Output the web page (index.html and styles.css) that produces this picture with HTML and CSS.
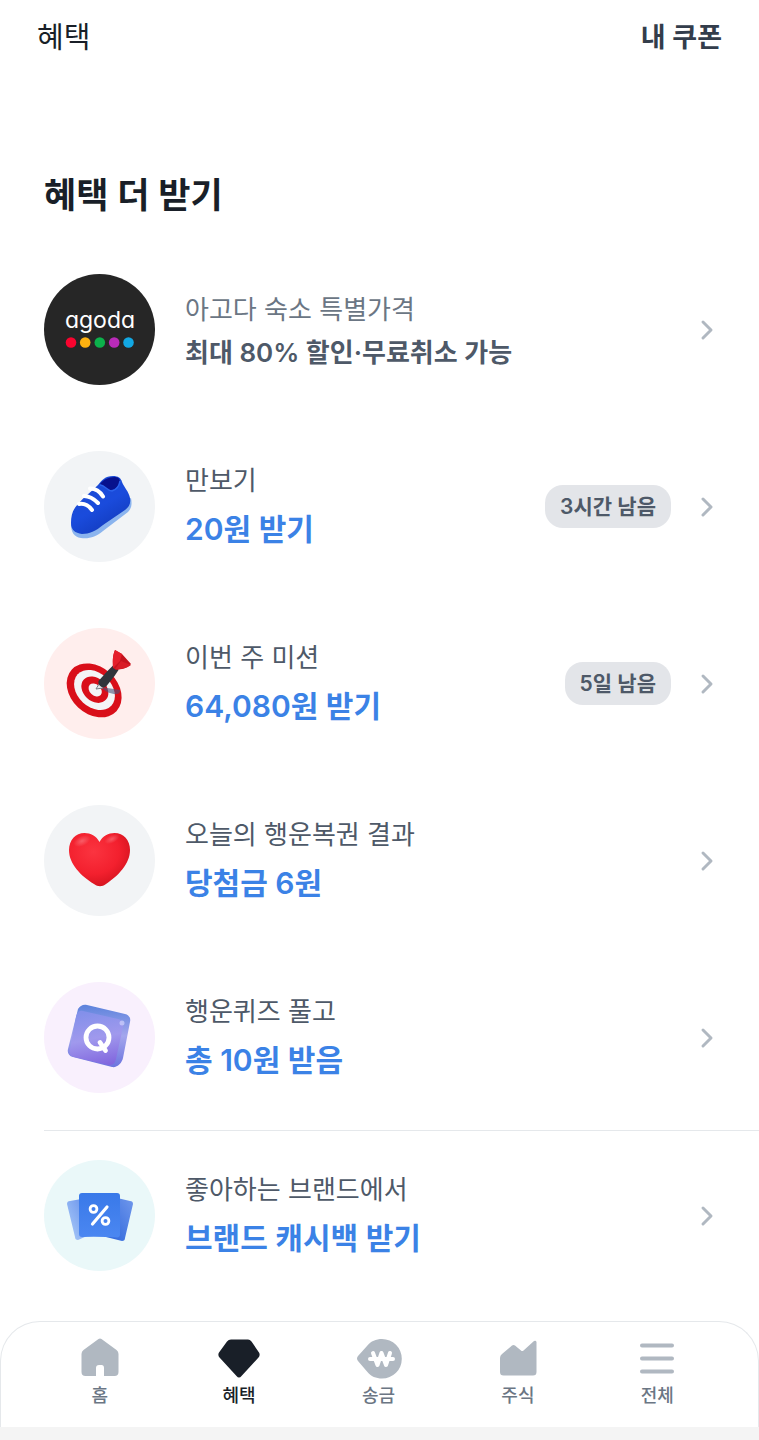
FILE: index.html
```
<!DOCTYPE html>
<html lang="ko">
<head>
    <meta charset="UTF-8">
    <meta name="viewport" content="width=device-width, initial-scale=1.0">
    <title>혜택</title>
    <link rel="stylesheet" href="styles.css">
</head>
<body>
    <header class="top-bar">
        <h1 class="top-title">혜택</h1>
        <a href="#coupons" class="coupon-link">내 쿠폰</a>
    </header>

    <main class="content">
        <h2 class="section-title">혜택 더 받기</h2>

        <ul class="benefit-list">
            <li>
                <a href="#agoda" class="benefit">
                    <svg class="benefit-icon" viewBox="0 0 111 111" aria-hidden="true">
                        <circle cx="55.5" cy="55.5" r="55.5" fill="#262626"/>
                        <text class="agoda-text" x="56" y="54" text-anchor="middle">agoda</text>
                        <circle cx="27" cy="68.500" r="5.300" fill="#f9042f"/>
                        <circle cx="41.200" cy="68.500" r="5.300" fill="#ffb210"/>
                        <circle cx="55.800" cy="68.500" r="5.300" fill="#0cb14b"/>
                        <circle cx="70.200" cy="68.500" r="5.300" fill="#b92bb8"/>
                        <circle cx="84.500" cy="68.500" r="5.300" fill="#12a8e3"/>
                    </svg>
                    <span class="benefit-text">
                        <span class="benefit-label muted">아고다 숙소 특별가격</span>
                        <strong class="benefit-desc">최대 80% 할인·무료취소 가능</strong>
                    </span>
                    <svg class="chevron" viewBox="0 0 16 24" aria-hidden="true"><path d="M4 4l8 8-8 8"/></svg>
                </a>
            </li>
            <li>
                <a href="#steps" class="benefit">
                    <svg class="benefit-icon" viewBox="4 6 111 111" aria-hidden="true">
                        <defs>
                            <linearGradient id="shoe" x1="0" y1="0" x2="0.6" y2="1">
                                <stop offset="0" stop-color="#1c4bd0"/>
                                <stop offset="0.6" stop-color="#1a4bdc"/>
                                <stop offset="1" stop-color="#123bbd"/>
                            </linearGradient>
                        </defs>
                        <circle cx="59.5" cy="61.5" r="55.5" fill="#f2f4f6"/>
                        <path d="M31 79c0 8 3 13 10 14 8 1 15-1 22-7l25-19c4-4 4-9 3-14z" fill="#8bb4ee"/>
                        <path d="M58 40c4-5 7-9 15-9 5 0 8 2 9 6 2 5 7 10 8 16 1 6-1 9-5 12L63 80c-7 6-14 9-21 9-7-1-11-4-11-11 0-8 2-14 7-19 6-7 13-12 20-19z" fill="url(#shoe)"/>
                        <path d="M60 39c3-4 8-7 15-7 4 0 6 3 4 7-2 3-5 6-8 6-4 0-7-4-11-6z" fill="#07118d"/>
                        <path d="M60 40c5 0 7 6 12 6 4-1 7-4 8-10" fill="none" stroke="#2b62ec" stroke-width="1.500"/>
                        <path d="M50 43.500c5 0 10 3 13 8M44 51c6 0 10 3 14 7M39 59c6-1 10 2 13 6" fill="none" stroke="#fff" stroke-width="4" stroke-linecap="round"/>
                    </svg>
                    <span class="benefit-text">
                        <span class="benefit-label">만보기</span>
                        <strong class="benefit-amount">20원 받기</strong>
                    </span>
                    <span class="badge">3시간 남음</span>
                    <svg class="chevron" viewBox="0 0 16 24" aria-hidden="true"><path d="M4 4l8 8-8 8"/></svg>
                </a>
            </li>
            <li>
                <a href="#mission" class="benefit">
                    <svg class="benefit-icon" viewBox="4 6 111 111" aria-hidden="true">
                        <circle cx="59.5" cy="61.5" r="55.5" fill="#ffeeed"/>
                        <g transform="rotate(43 54.500 68)">
                            <ellipse cx="54.500" cy="68.500" rx="30.500" ry="23.500" fill="#d90f1a"/>
                            <ellipse cx="54.500" cy="68" rx="23" ry="17" fill="#f4f4f6"/>
                            <ellipse cx="54.500" cy="67.500" rx="15" ry="11.500" fill="#d90f1a"/>
                            <ellipse cx="55" cy="67.500" rx="7.500" ry="5.500" fill="#f4f4f6"/>
                        </g>
                        <path d="M61 65l19 3c0 3-1 4-4 4-6 0-10-2-15-7z" fill="#48547c" opacity="0.6"/>
                        <path d="M56 67l3-5 4 4z" fill="#e5e7eb" stroke="#777d86"/>
                        <path d="M58.500 59l9-10 6-6 5 5-4 6-8 10c-3 3-9 0-8-5z" fill="#30343b"/>
                        <path d="M73 46c0-6-1-11 2-18l7 4 9 10c-5 5-9 5-15 6z" fill="#c5131e"/>
                        <path d="M73 46c0-6-1-11 2-18l7 4-2 7z" fill="#e51f2b"/>
                        <path d="M75 47l6-8 10 4c-5 4-10 4-16 4z" fill="#d91c27"/>
                    </svg>
                    <span class="benefit-text">
                        <span class="benefit-label">이번 주 미션</span>
                        <strong class="benefit-amount">64,080원 받기</strong>
                    </span>
                    <span class="badge">5일 남음</span>
                    <svg class="chevron" viewBox="0 0 16 24" aria-hidden="true"><path d="M4 4l8 8-8 8"/></svg>
                </a>
            </li>
            <li>
                <a href="#lottery" class="benefit">
                    <svg class="benefit-icon" viewBox="4 5 111 111" aria-hidden="true">
                        <defs>
                            <radialGradient id="heart" cx="0.4" cy="0.35" r="0.7">
                                <stop offset="0" stop-color="#fb3440"/>
                                <stop offset="0.6" stop-color="#f3202e"/>
                                <stop offset="1" stop-color="#d2121d"/>
                            </radialGradient>
                            <radialGradient id="shine">
                                <stop offset="0" stop-color="#fff" stop-opacity="0.25"/>
                                <stop offset="1" stop-color="#fff" stop-opacity="0"/>
                            </radialGradient>
                        </defs>
                        <circle cx="59.5" cy="60.5" r="55.5" fill="#f2f4f6"/>
                        <path d="M59.500 42c3-6 9-9 15-9 9 0 15.500 7 15.500 17 0 14-12 26-24 34-4 3-8 3-12 0C41 76 29 64 29 50c0-10 6.500-17 15.500-17 6 0 12 3 15 9z" fill="url(#heart)"/>
                        <ellipse cx="42" cy="41" rx="9" ry="5" fill="url(#shine)" transform="rotate(-25 42 41)"/>
                        <ellipse cx="72" cy="39" rx="8" ry="4" fill="url(#shine)" transform="rotate(-25 72 39)"/>
                    </svg>
                    <span class="benefit-text">
                        <span class="benefit-label">오늘의 행운복권 결과</span>
                        <strong class="benefit-amount">당첨금 6원</strong>
                    </span>
                    <svg class="chevron" viewBox="0 0 16 24" aria-hidden="true"><path d="M4 4l8 8-8 8"/></svg>
                </a>
            </li>
            <li>
                <a href="#quiz" class="benefit before-divider">
                    <svg class="benefit-icon" viewBox="4 5 111 111" aria-hidden="true">
                        <defs>
                            <linearGradient id="cube" x1="0.4" y1="0" x2="0.6" y2="1">
                                <stop offset="0" stop-color="#8390ea"/>
                                <stop offset="0.5" stop-color="#a099ed"/>
                                <stop offset="1" stop-color="#8267de"/>
                            </linearGradient>
                            <linearGradient id="cubeSide" x1="0" y1="0" x2="0" y2="1">
                                <stop offset="0" stop-color="#5c83dc"/>
                                <stop offset="0.5" stop-color="#a4a6ed"/>
                                <stop offset="1" stop-color="#6c74de"/>
                            </linearGradient>
                        </defs>
                        <circle cx="59.5" cy="60.5" r="55.5" fill="#f9f0fd"/>
                        <path d="M38 32c2-3 5-5 9-4l38 9c4 1 6 4 5 8l-7 36c-1 5-6 10-11 9l-39-10c-4-1-6-4-5-8z" fill="url(#cubeSide)"/>
                        <path d="M43 34l35 8c4 1 6 4 5 8l-7 32c-1 5-4 7-8 6l-34-8c-4-1-5-4-4-8l6-32c1-4 3-7 7-6z" fill="url(#cube)"/>
                        <circle cx="57.500" cy="60.500" r="11.500" fill="none" stroke="#fff" stroke-width="4.800"/>
                        <path d="M60 65.500l5.500 8" fill="none" stroke="#fff" stroke-width="4.800" stroke-linecap="round"/>
                        <circle cx="82" cy="46" r="2.500" fill="#d0d2fc" opacity="0.7"/>
                    </svg>
                    <span class="benefit-text">
                        <span class="benefit-label">행운퀴즈 풀고</span>
                        <strong class="benefit-amount">총 10원 받음</strong>
                    </span>
                    <svg class="chevron" viewBox="0 0 16 24" aria-hidden="true"><path d="M4 4l8 8-8 8"/></svg>
                </a>
            </li>
            <li class="divided">
                <a href="#cashback" class="benefit after-divider">
                    <svg class="benefit-icon" viewBox="4 5 111 111" aria-hidden="true">
                        <defs>
                            <linearGradient id="cardLeft" x1="0" y1="1" x2="1" y2="0">
                                <stop offset="0" stop-color="#afcff9"/>
                                <stop offset="1" stop-color="#648eeb"/>
                            </linearGradient>
                            <linearGradient id="cardRight" x1="1" y1="0" x2="0" y2="1">
                                <stop offset="0" stop-color="#7198ec"/>
                                <stop offset="1" stop-color="#2a63da"/>
                            </linearGradient>
                            <linearGradient id="cardFront" x1="0" y1="0" x2="0" y2="1">
                                <stop offset="0" stop-color="#3979e9"/>
                                <stop offset="1" stop-color="#4b87f1"/>
                            </linearGradient>
                        </defs>
                        <circle cx="59.5" cy="60.5" r="55.5" fill="#eaf8f9"/>
                        <path d="M30 46l17-3v38l-9 4c-2 0-3-1-3-3l-8-33c0-2 1-3 3-3z" fill="url(#cardLeft)"/>
                        <path d="M73 42l17 4c2 0 3 1 3 3l-8 34c0 2-1 3-3 3l-16-4z" fill="url(#cardRight)"/>
                        <path d="M42 38h35a3 3 0 0 1 3 3v38a3 3 0 0 1-3 3.500q-17-1-35-.5a3 3 0 0 1-3-3V41a3 3 0 0 1 3-3z" fill="url(#cardFront)"/>
                        <path d="M67 52L52.500 69" stroke="#fff" stroke-width="3.200" stroke-linecap="round"/>
                        <circle cx="53.500" cy="54" r="3.400" fill="none" stroke="#fff" stroke-width="2.800"/>
                        <circle cx="65.500" cy="66" r="3.400" fill="none" stroke="#fff" stroke-width="2.800"/>
                    </svg>
                    <span class="benefit-text">
                        <span class="benefit-label">좋아하는 브랜드에서</span>
                        <strong class="benefit-amount">브랜드 캐시백 받기</strong>
                    </span>
                    <svg class="chevron" viewBox="0 0 16 24" aria-hidden="true"><path d="M4 4l8 8-8 8"/></svg>
                </a>
            </li>
        </ul>
    </main>

    <footer class="bottom-area">
        <nav class="tab-bar">
            <a href="#home" class="tab">
                <svg class="tab-icon" viewBox="0 0 48 42" aria-hidden="true">
                    <path d="M22.500 1q1.500-1 3 0l15 11q2 1.500 2 4v18q0 4-4 4H28v-8q0-3-2.500-3h-2.500q-3 0-3 3v8h-10.500q-4 0-4-4V16q0-2.500 2-4z"/>
                </svg>
                <span>홈</span>
            </a>
            <a href="#benefits" class="tab active" aria-current="page">
                <svg class="tab-icon" viewBox="0 0 48 42" aria-hidden="true">
                    <path d="M16 1.500h17q2 0 3.500 2l7.500 11q1.500 2.500-.5 5L26.500 38q-2.500 3-5 0l-17-18.500q-2-2.500-.5-5l8-11q1.500-2 4-2z"/>
                </svg>
                <span>혜택</span>
            </a>
            <a href="#transfer" class="tab">
                <svg class="tab-icon" viewBox="0 0 48 42" aria-hidden="true">
                    <path d="M27 1a19.800 19.800 0 0 1 0 39.600c-6 0-11-2-15-7L3 23q-2-2.500 0-5l9-10c4-5 9-7 15-7z"/>
                    <path class="won" d="M15 21h23M18 15l4.500 12 4-12 4.500 12 4-12"/>
                </svg>
                <span>송금</span>
            </a>
            <a href="#stocks" class="tab">
                <svg class="tab-icon" viewBox="0 0 48 42" aria-hidden="true">
                    <path d="M6 20q0-2.500 2-4L18 7.500q1.500-1 3 0l6 5q1 1 2.500 0L40 3q2-1 2.500 1v30q0 3.500-3.500 3.500H9.500Q6 37.500 6 34z"/>
                </svg>
                <span>주식</span>
            </a>
            <a href="#all" class="tab">
                <svg class="tab-icon menu" viewBox="0 0 48 42" aria-hidden="true">
                    <path d="M9 7.500h30M9 20.500h30M9 33.500h30"/>
                </svg>
                <span>전체</span>
            </a>
        </nav>
    </footer>
</body>
</html>
```
FILE: styles.css
```
:root {
    --bg: #ffffff;
    --bg-bottom: #f4f4f4;
    --text-primary: #191f28;
    --text-strong: #333d4b;
    --text-desc: #4e5968;
    --text-muted: #6b7684;
    --icon-gray: #b0b8c1;
    --line: #e5e8eb;
    --accent: #3b82e6;
}

* {
    margin: 0;
    padding: 0;
    box-sizing: border-box;
}

body {
    min-height: 100vh;
    display: flex;
    flex-direction: column;
    font-family: Inter, 'Noto Sans CJK KR', sans-serif;
    background-color: var(--bg);
    color: var(--text-primary);
}

a {
    color: inherit;
    text-decoration: none;
}

.top-bar {
    display: flex;
    align-items: center;
    justify-content: space-between;
    height: 70px;
    padding: 0 37px;
}

.top-title {
    font-size: 29px;
    font-weight: 400;
}

.coupon-link {
    font-size: 27px;
    font-weight: 600;
    color: var(--text-strong);
}

.content {
    flex: 1;
    padding-top: 99px;
}

.section-title {
    padding: 0 44px;
    margin-bottom: 20px;
    font-size: 35px;
    font-weight: 600;
    line-height: 52px;
}

.benefit-list {
    list-style: none;
    padding-left: 44px;
}

.benefit {
    display: flex;
    align-items: center;
    padding: 33px 44px 33px 0;
}

.before-divider {
    padding-bottom: 37px;
}

.after-divider {
    padding-top: 29px;
}

.divided {
    border-top: 1px solid var(--line);
}

.benefit-icon {
    flex: none;
    width: 111px;
    height: 111px;
    margin-right: 30px;
}

.agoda-text {
    font-family: Inter, sans-serif;
    font-size: 23px;
    font-feature-settings: 'cv11';
    fill: #ffffff;
}

.benefit-text {
    flex: 1;
    display: flex;
    flex-direction: column;
    padding-top: 3px;
}

.benefit-label {
    font-size: 26px;
    line-height: 42px;
    color: var(--text-desc);
}

.benefit-label.muted {
    color: var(--text-muted);
}

.benefit-desc {
    font-size: 26px;
    font-weight: 600;
    line-height: 43px;
    color: var(--text-desc);
}

.benefit-amount {
    font-size: 30px;
    font-weight: 600;
    line-height: 54px;
    color: var(--accent);
}

.badge {
    padding: 0 15px;
    border-radius: 18px;
    font-size: 21px;
    font-weight: 600;
    line-height: 43px;
    color: var(--text-desc);
    background-color: #e3e5e9;
}

.chevron {
    flex: none;
    width: 16px;
    height: 24px;
    margin-left: 28px;
    fill: none;
    stroke: var(--icon-gray);
    stroke-width: 3;
    stroke-linecap: round;
    stroke-linejoin: round;
}

.bottom-area {
    padding-bottom: 13px;
    background: linear-gradient(var(--bg) 50%, var(--bg-bottom) 50%);
}

.tab-bar {
    display: flex;
    height: 106px;
    padding: 16px 31px 0 29px;
    border: 1px solid var(--line);
    border-bottom: none;
    border-radius: 40px 40px 0 0;
    background-color: var(--bg);
}

.tab {
    flex: 1;
    display: flex;
    flex-direction: column;
    align-items: center;
    font-size: 18px;
    font-weight: 500;
    line-height: 31px;
    color: var(--text-muted);
}

.tab.active {
    color: var(--text-primary);
}

.tab-icon {
    width: 48px;
    height: 42px;
    fill: var(--icon-gray);
}

.active .tab-icon {
    fill: var(--text-primary);
}

.tab-icon .won {
    fill: none;
    stroke: var(--bg);
    stroke-width: 4;
    stroke-linecap: round;
    stroke-linejoin: round;
}

.tab-icon.menu {
    stroke: var(--icon-gray);
    stroke-width: 4;
    stroke-linecap: round;
}
```
